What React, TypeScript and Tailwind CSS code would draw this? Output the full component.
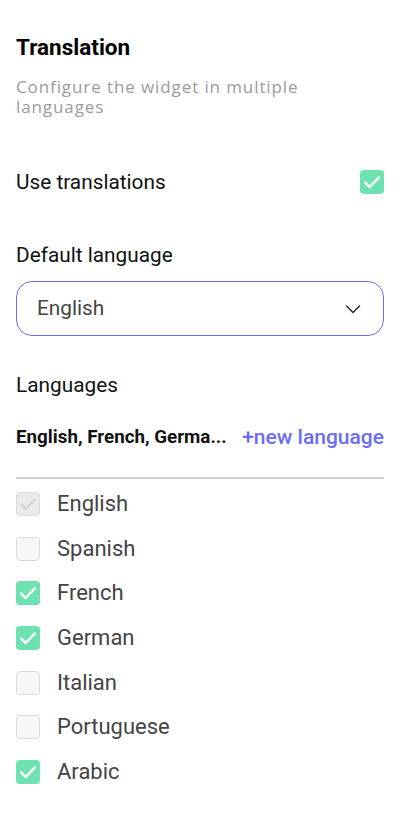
import React from 'react';

const languages = [
  { name: 'English', state: 'disabled' },
  { name: 'Spanish', state: 'off' },
  { name: 'French', state: 'on' },
  { name: 'German', state: 'on' },
  { name: 'Italian', state: 'off' },
  { name: 'Portuguese', state: 'off' },
  { name: 'Arabic', state: 'on' },
];

function Check({ className }: { className: string }) {
  return (
    <svg viewBox="0 0 24 24" className={className} fill="none" stroke="currentColor" strokeWidth={2.6} strokeLinecap="round" strokeLinejoin="round">
      <path d="M4.5 12.5l5 5L19.5 7" />
    </svg>
  );
}

function Box({ state }: { state: string }) {
  if (state === 'on') {
    return (
      <div className="w-6 h-6 rounded-[4px] bg-[#6ee2b1] flex items-center justify-center text-white shrink-0">
        <Check className="w-[22px] h-[22px]" />
      </div>
    );
  }
  if (state === 'disabled') {
    return (
      <div className="w-6 h-6 rounded-[4px] bg-[#ebebeb] border border-[#dcdcdc] flex items-center justify-center text-[#d4d4d4] shrink-0">
        <Check className="w-[22px] h-[22px]" />
      </div>
    );
  }
  return <div className="w-6 h-6 rounded-[4px] bg-[#f7f7f7] border border-[#dcdcdc] shrink-0" />;
}

export default function App() {
  return (
    <div className="w-[400px] min-h-[830px] bg-white px-4 pt-[34px] font-['Roboto',sans-serif]">
      <h1 className="text-[22.5px] font-bold text-black leading-[26px]">Translation</h1>
      <p className="mt-[17px] w-[320px] text-[17px] leading-[20px] tracking-[0.9px] text-[#9b9b9b] font-['Open_Sans',sans-serif]">
        Configure the widget in multiple languages
      </p>

      <div className="mt-[53px] flex items-center justify-between">
        <span className="text-[20.8px] text-[#111] leading-[24px]">Use translations</span>
        <Box state="on" />
      </div>

      <div className="mt-[49px] text-[20.8px] text-[#111] leading-[24px]">Default language</div>
      <div className="mt-[14px] h-[55px] rounded-[16px] border border-[#6b6cf6] flex items-center justify-between pl-5 pr-5">
        <span className="text-[20.8px] text-[#444]">English</span>
        <svg viewBox="0 0 20 20" className="w-[20px] h-[20px] text-[#222]" fill="none" stroke="currentColor" strokeWidth={1.4} strokeLinecap="round" strokeLinejoin="round">
          <path d="M3.5 7l6.5 6.5L16.5 7" />
        </svg>
      </div>

      <div className="mt-[37px] text-[20.8px] text-[#111] leading-[24px]">Languages</div>
      <div className="mt-[28px] flex items-center justify-between">
        <span className="text-[18.8px] font-bold text-[#111] leading-[24px]">English, French, Germa...</span>
        <span className="text-[21px] font-medium text-[#6b6cf6] leading-[24px]">+new language</span>
      </div>
      <div className="mt-[28px] h-[2px] bg-[#d4d4d4]" />

      <div className="mt-[13px] flex flex-col gap-[20.7px]">
        {languages.map((l) => (
          <div key={l.name} className="flex items-center gap-[17px]">
            <Box state={l.state} />
            <span className="text-[22px] text-[#444] leading-[24px]">{l.name}</span>
          </div>
        ))}
      </div>
    </div>
  );
}
